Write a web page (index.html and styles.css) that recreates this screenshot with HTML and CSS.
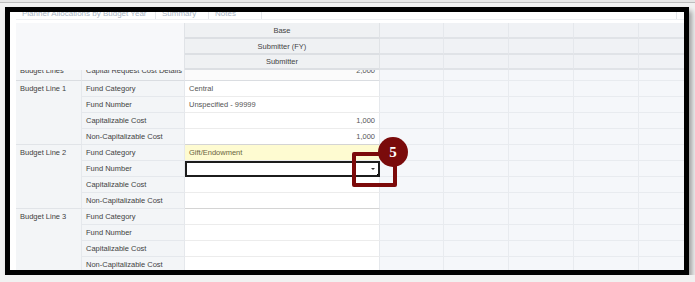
FILE: index.html
```html
<!DOCTYPE html>
<html lang="en">
<head>
    <meta charset="UTF-8">
    <title>Capital Request - Budget Lines</title>
    <link rel="stylesheet" href="styles.css">
</head>
<body>
    <div class="topbar"></div>
    <div class="frame">
        <!-- tabs, scrolled mostly out of view -->
        <div class="tabs">
            <span class="tab wide">Planner Allocations by Budget Year</span>
            <span class="tab">Summary</span>
            <span class="tab">Notes</span>
            <span class="tab rest"></span>
        </div>

        <div class="sheet">
            <!-- header -->
            <div class="c corner"></div>
            <div class="c hd">Base</div>
            <div class="c hx"></div><div class="c hx"></div><div class="c hx"></div><div class="c hx"></div><div class="c hx"></div>
            <div class="c hd">Submitter (FY)</div>
            <div class="c hx"></div><div class="c hx"></div><div class="c hx"></div><div class="c hx"></div><div class="c hx"></div>
            <div class="c hd">Submitter</div>
            <div class="c hx"></div><div class="c hx"></div><div class="c hx"></div><div class="c hx"></div><div class="c hx"></div>

            <!-- row under the frozen header -->
            <div class="c lbl cut"><span>Budget Lines</span></div>
            <div class="c fld cut"><span>Capital Request Cost Details</span></div>
            <div class="c val num cut"><span>2,000</span></div>
            <div class="c x"></div><div class="c x"></div><div class="c x"></div><div class="c x"></div><div class="c x"></div>

            <!-- Budget Line 1 -->
            <div class="c lbl grp">Budget Line 1</div>
            <div class="c fld">Fund Category</div>
            <div class="c val">Central</div>
            <div class="c x"></div><div class="c x"></div><div class="c x"></div><div class="c x"></div><div class="c x"></div>
            <div class="c fld">Fund Number</div>
            <div class="c val">Unspecified - 99999</div>
            <div class="c x"></div><div class="c x"></div><div class="c x"></div><div class="c x"></div><div class="c x"></div>
            <div class="c fld">Capitalizable Cost</div>
            <div class="c val num">1,000</div>
            <div class="c x"></div><div class="c x"></div><div class="c x"></div><div class="c x"></div><div class="c x"></div>
            <div class="c fld end">Non-Capitalizable Cost</div>
            <div class="c val num end">1,000</div>
            <div class="c x"></div><div class="c x"></div><div class="c x"></div><div class="c x"></div><div class="c x"></div>

            <!-- Budget Line 2 -->
            <div class="c lbl grp">Budget Line 2</div>
            <div class="c fld">Fund Category</div>
            <div class="c val changed">Gift/Endowment</div>
            <div class="c x"></div><div class="c x"></div><div class="c x"></div><div class="c x"></div><div class="c x"></div>
            <div class="c fld">Fund Number</div>
            <div class="c val sel"><span class="arrow"></span><span class="handle"></span></div>
            <div class="c x"></div><div class="c x"></div><div class="c x"></div><div class="c x"></div><div class="c x"></div>
            <div class="c fld">Capitalizable Cost</div>
            <div class="c val"></div>
            <div class="c x"></div><div class="c x"></div><div class="c x"></div><div class="c x"></div><div class="c x"></div>
            <div class="c fld end">Non-Capitalizable Cost</div>
            <div class="c val end"></div>
            <div class="c x"></div><div class="c x"></div><div class="c x"></div><div class="c x"></div><div class="c x"></div>

            <!-- Budget Line 3 -->
            <div class="c lbl grp">Budget Line 3</div>
            <div class="c fld">Fund Category</div>
            <div class="c val"></div>
            <div class="c x"></div><div class="c x"></div><div class="c x"></div><div class="c x"></div><div class="c x"></div>
            <div class="c fld">Fund Number</div>
            <div class="c val"></div>
            <div class="c x"></div><div class="c x"></div><div class="c x"></div><div class="c x"></div><div class="c x"></div>
            <div class="c fld">Capitalizable Cost</div>
            <div class="c val"></div>
            <div class="c x"></div><div class="c x"></div><div class="c x"></div><div class="c x"></div><div class="c x"></div>
            <div class="c fld end">Non-Capitalizable Cost</div>
            <div class="c val end"></div>
            <div class="c x"></div><div class="c x"></div><div class="c x"></div><div class="c x"></div><div class="c x"></div>
        </div>

        <!-- step callout -->
        <div class="callout-box"></div>
        <div class="callout-num">5</div>
    </div>
</body>
</html>
```

FILE: styles.css
```css
body {
    margin: 0;
    background-color: #f1f1f1;
    font-family: "Liberation Sans", Arial, sans-serif;
}

.topbar {
    height: 2px;
    background-color: #e6e6e6;
    border-bottom: 1px solid #bdbdbd;
}

.frame {
    position: relative;
    margin: 4px 0 0 5px;
    width: 668px;
    height: 258px;
    border: 5px solid #000;
    background-color: #fff;
    padding-left: 6px;
    box-sizing: content-box;
    overflow: hidden;
    box-shadow: 3px 4px 5px rgba(0, 0, 0, 0.35);
}

/* tab strip, mostly scrolled away */
.tabs {
    display: flex;
    height: 7px;
    margin-bottom: 3px;
    border-bottom: 1px solid #eef0f3;
    overflow: hidden;
}

.tab {
    display: flex;
    align-items: flex-end;
    padding: 0 6px;
    font-size: 8px;
    line-height: 11px;
    color: #a9b5c4;
    border-right: 1px solid #e3e6ea;
    white-space: nowrap;
    overflow: hidden;
}

.tab.wide {
    width: 127px;
}

.tab:not(.wide):not(.rest) {
    width: 40px;
}

.tab.rest {
    width: 402px;
}

/* spreadsheet */
.sheet {
    display: grid;
    grid-template-columns: 66px 103px 195px 64px 65px 65px 65px 65px;
    grid-template-rows: 16px 16px 15px 11px repeat(12, 16px);
    font-size: 7.5px;
    color: #3f3f3f;
}

.c {
    display: flex;
    align-items: center;
    box-sizing: border-box;
    padding: 0 4px;
    border-right: 1px solid #e5e8ec;
    border-bottom: 1px solid #e5e8ec;
    white-space: nowrap;
    overflow: hidden;
}

.corner {
    grid-column: span 2;
    grid-row: span 3;
    background-color: #f7f8fa;
    border-right-color: #e0e3e7;
    border-bottom: none;
}

.hd {
    justify-content: center;
    background-color: #eff1f3;
    border-bottom: 2px solid #dcdfe3;
    border-right-color: #e0e3e6;
    color: #444;
}

.hx {
    background-color: #f0f2f5;
    border-bottom: 2px solid #e0e3e7;
}

.lbl {
    background-color: #f3f5f7;
    border-bottom-color: #e1e4e8;
}

.grp {
    grid-row: span 4;
    align-items: flex-start;
    line-height: 16px;
}

.fld {
    background-color: #f3f5f7;
}

.val {
    background-color: #fff;
    color: #555;
    border-bottom-color: #ececec;
}

.val.end {
    border-bottom-color: #d4d4d4;
}

.num {
    justify-content: flex-end;
}

.x {
    background-color: #f5f7fa;
    border-color: #e8ebef;
}

/* row half hidden under the frozen header */
.cut {
    align-items: flex-end;
    line-height: 18px;
    border-bottom-color: #dadde1;
}

.val.cut {
    background-color: #fbfbfb;
}

.changed {
    background-color: #fefbd1;
    color: #6a6540;
}

.sel {
    position: relative;
    justify-content: flex-end;
    border: 2px solid #1c1c1c;
    padding-right: 3px;
}

.arrow {
    width: 0;
    height: 0;
    border-left: 2px solid transparent;
    border-right: 2px solid transparent;
    border-top: 2px solid #333;
}

.handle {
    position: absolute;
    right: -2px;
    bottom: -2px;
    width: 3px;
    height: 3px;
    background-color: #000;
}

/* red step annotation */
.callout-box {
    position: absolute;
    left: 342px;
    top: 140px;
    width: 45px;
    height: 35px;
    box-sizing: border-box;
    border: 4px solid #7c0a0a;
    border-radius: 2px;
}

.callout-num {
    position: absolute;
    left: 368px;
    top: 125px;
    width: 30px;
    height: 30px;
    border-radius: 50%;
    background-color: #7a0b0b;
    color: #fff;
    font-family: "Liberation Serif", "Times New Roman", serif;
    font-weight: bold;
    font-size: 15px;
    line-height: 30px;
    text-align: center;
}
```
